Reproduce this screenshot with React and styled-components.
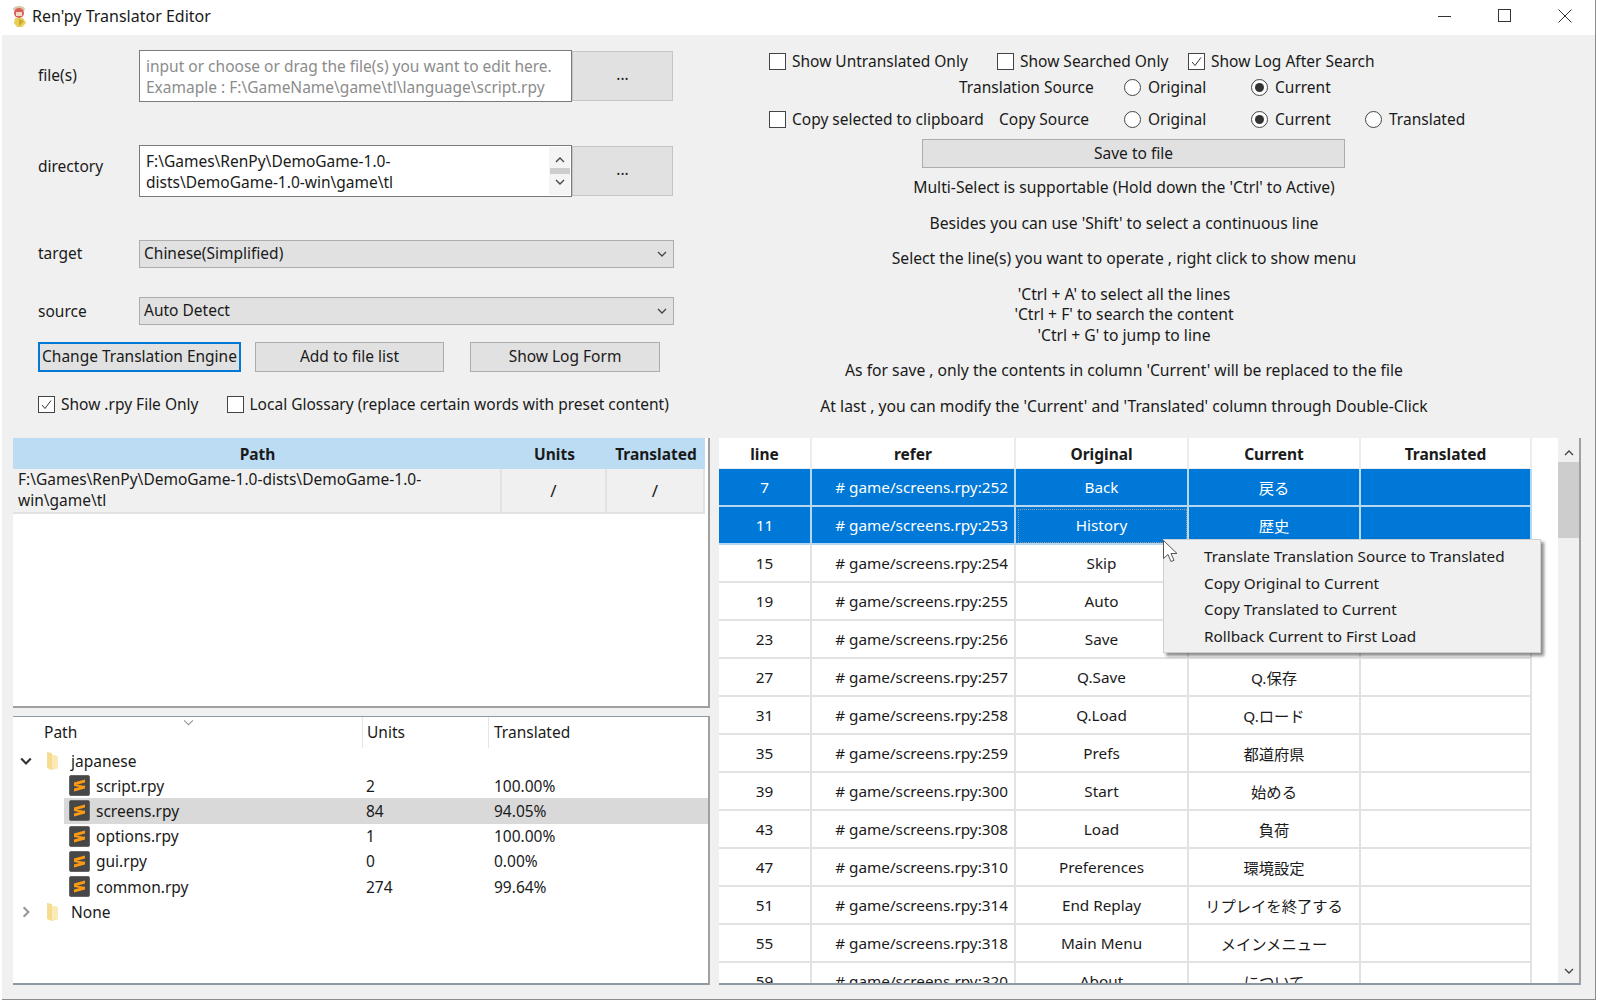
import React from "react";
import styled, { createGlobalStyle } from "styled-components";

const Global = createGlobalStyle`
  html, body { margin: 0; padding: 0; background: #fff; }
  * { box-sizing: border-box; }
  body { font-family: "Noto Sans", "Noto Sans CJK JP", sans-serif; font-size: 15.5px; color: #1a1a1a; }
`;

const Window = styled.div`
  width: 1594px; height: 1000px; margin-left: 2px; background: #f0f0f0;
  border-right: 1px solid #8c8c8c; border-bottom: 1px solid #8c8c8c;
  display: flex; flex-direction: column; overflow: hidden;
`;
const TitleBar = styled.header`
  height: 35px; background: #fff; display: flex; align-items: center; padding: 0 0 3px 9px; flex: none;
`;
const Title = styled.span` margin-left: 3px; font-size: 16px; flex: 1; `;
const WinBtn = styled.span`
  width: 60px; display: flex; justify-content: center; align-items: center; height: 32px;
  svg { display: block; }
`;

const Top = styled.div` height: 403px; display: grid; grid-template-columns: 716px 1fr; flex: none; `;
const LeftForm = styled.section` padding: 15px 0 0 36px; display: flex; flex-direction: column; `;
const FieldRow = styled.div`
  display: grid; grid-template-columns: 101px 1fr; width: 636px; align-items: center; margin-top: ${p => p.$mt || 0}px;
`;
const Label = styled.label` align-self: center; padding-bottom: ${p => p.$pb || 0}px; `;
const InputGroup = styled.div` display: grid; grid-template-columns: 433px 101px; height: 52px; align-items: center; `;
const TextBox = styled.div`
  height: 52px; background: #fff; border: 1px solid #7a7a7a; padding: 5px 6px 3px; line-height: 20.5px;
  color: ${p => p.$hint ? "#8c8c8c" : "#1a1a1a"}; display: flex; white-space: pre-line; justify-content: space-between;
`;
const MiniScroll = styled.div`
  width: 21px; margin: -4px -5px -2px 0; background: #f4f4f4; display: flex; flex-direction: column; align-items: center; justify-content: space-between; padding: 8px 0;
`;
const MiniThumb = styled.div` width: 20px; height: 6px; background: #cdcdcd; `;
const BrowseBtn = styled.button`
  height: 50px; background: #e1e1e1; border: 1px solid #c4c4c4; font: inherit; color: #1a1a1a; padding: 0 0 4px;
`;
const Combo = styled.div`
  height: 28px; background: #e1e1e1; border: 1px solid #adadad; display: flex; align-items: center; justify-content: space-between;
  padding: 0 6px 2px 4px; width: 535px;
  svg { margin-top: 2px; }
`;
const BtnRow = styled.div` display: flex; margin-top: 17px; `;
const Btn = styled.button`
  height: 30px; width: ${p => p.$w}px; margin-left: ${p => p.$ml || 0}px; padding: 0 0 2px; font: inherit; color: #1a1a1a; background: #e1e1e1;
  border: ${p => p.$focus ? "2px solid #0078d7" : "1px solid #adadad"};
`;
const CheckRow = styled.div` display: flex; margin-top: 20px; `;
const CheckLabel = styled.label`
  display: inline-flex; align-items: center; gap: ${p => p.$gap || 6}px; height: 24px; white-space: nowrap; margin-left: ${p => p.$ml || 0}px;
`;
const Box = styled.span`
  width: 17px; height: 17px; border: 1px solid #444; background: #fff; display: flex; align-items: center; justify-content: center; flex: none;
`;
const Radio = styled.span`
  width: 17px; height: 17px; border: 1px solid #444; border-radius: 50%; background: #fff; display: flex; align-items: center; justify-content: center; flex: none;
  &::after { content: ""; width: 9px; height: 9px; border-radius: 50%; background: ${p => p.$on ? "#333" : "transparent"}; }
`;

const RightForm = styled.section` padding-top: 14px; display: flex; flex-direction: column; width: 812px; `;
const OptGrid = styled.div`
  display: grid; grid-template-columns: ${p => p.$cols}; padding-left: ${p => p.$pl}px; margin-top: ${p => p.$mt || 0}px; height: 24px; align-items: center; white-space: nowrap;
`;
const SaveBtn = styled.button`
  width: 423px; height: 29px; margin: 8px 0 0 204px; flex: none; background: #e1e1e1; border: 1px solid #adadad; font: inherit; color: #1a1a1a; padding: 0 0 2px;
`;
const Note = styled.p`
  margin: ${p => p.$mt ?? 15}px 0 0; text-align: center; line-height: 20.5px; white-space: pre-line; font-size: 15.7px;
`;

const Bottom = styled.div` flex: 1; min-height: 0; display: grid; grid-template-columns: 697px 862px; gap: 9px; padding: 0 0 14px 11px; `;
const LeftPanels = styled.div` display: grid; grid-template-rows: 270px 269px; gap: 8px; `;
const FileTable = styled.div` background: #fff; border-right: 2px solid #a0a0a0; border-bottom: 2px solid #a0a0a0; overflow: hidden; `;
const FTRow = styled.div` display: grid; grid-template-columns: 489px 105px 98px; width: 692px; `;
const FTHead = styled.div`
  height: 31px; background: #bcdcf4; font-weight: 700; display: flex; align-items: center; justify-content: center;
`;
const FTCell = styled.div`
  height: 45px; background: #f0f0f0; border-right: 2px solid #e2e2e2; border-bottom: 2px solid #e2e2e2;
  display: block; line-height: 20.5px; padding: ${p => p.$center ? "12px 0 0" : "0 4px 0 5px"};
  text-align: ${p => p.$center ? "center" : "left"}; font-size: ${p => p.$center ? 17 : 15.5}px;
`;

const Tree = styled.div` background: #fff; border-top: 1px solid #8f98a3; border-right: 2px solid #a0a0a0; border-bottom: 2px solid #8f98a3; `;
const TreeHead = styled.div` position: relative; height: 31px; display: grid; grid-template-columns: 350px 126px 1fr; align-items: center; `;
const TH = styled.div` padding-left: ${p => p.$pl}px; height: 31px; line-height: 30px; border-right: ${p => p.$sep ? "1px solid #e5e5e5" : "0"}; `;
const SortMark = styled.span` position: absolute; left: 170px; top: 0; line-height: 0; `;
const TreeRow = styled.div`
  height: 25.2px; display: grid; grid-template-columns: ${p => p.$file ? "297px 128px 1fr" : "350px 126px 1fr"}; align-items: center;
  margin-left: ${p => p.$file ? 51 : 0}px; background: ${p => p.$sel ? "#d9d9d9" : "transparent"};
`;
const TreeName = styled.div` display: flex; align-items: center; `;
const Twisty = styled.span` width: 26px; margin-left: 7px; display: flex; align-items: center; `;
const FolderName = styled.span` margin-left: 12px; `;
const FileName = styled.span` margin-left: 6px; `;
const FileIconWrap = styled.span` margin-left: 5px; display: flex; `;
const TD = styled.div` padding-left: 5px; `;

const Grid = styled.div` position: relative; background: #fff; overflow: hidden; border-right: 2px solid #a0a0a0; border-bottom: 2px solid #8f98a3; height: 547px; `;
const GRow = styled.div` display: grid; grid-template-columns: 93px 204px 173px 172px 171px; width: 813px; `;
const GHead = styled.div` height: 31px; display: flex; align-items: center; justify-content: center; padding-top: 2px; font-weight: 700; border-right: 2px solid #ececec; border-bottom: 1px solid #ececec; `;
const GCell = styled.div`
  height: 38px; display: flex; align-items: center; justify-content: ${p => p.$right ? "flex-end" : "center"}; padding: 0 ${p => p.$right ? 6 : 0}px 1px 0;
  font-size: 15.3px;
  background: ${p => p.$sel ? "#0078d7" : "#fff"}; color: ${p => p.$sel ? "#fff" : "#1a1a1a"};
  border-right: 2px solid ${p => p.$sel ? "#b8d8f2" : "#e2e2e2"}; border-bottom: 2px solid ${p => p.$sel ? "#b8d8f2" : "#e2e2e2"};
  outline: ${p => p.$focus ? "1px dotted #9a9a9a" : "0"}; outline-offset: -3px;
`;
const VScroll = styled.div`
  position: absolute; right: 0; top: 0; bottom: 0; width: 21px; background: #f0f0f0; display: flex; flex-direction: column; align-items: center;
  justify-content: space-between; padding: 10px 0 7px;
`;
const VThumb = styled.div` position: absolute; left: 0; top: 24px; width: 21px; height: 76px; background: #cdcdcd; `;
const Menu = styled.div`
  position: absolute; left: 444px; top: 101px; width: 378px; height: 114px; background: #f0f0f0; border: 1px solid #cfcfcf;
  box-shadow: 3px 3px 3px rgba(0,0,0,.45); padding: 3px 0 0 40px; font-size: 15.3px;
`;
const MenuItem = styled.div` height: 26.6px; line-height: 26px; white-space: nowrap; `;
const Cursor = styled.svg` position: absolute; left: 444px; top: 102px; `;

const Chev = ({ dir = "down", size = 10, color = "#444", sw = 1.3 }) => {
  const d = { down: "M1 3l4 4 4-4", up: "M1 7l4-4 4 4", right: "M3 1l4 4-4 4" }[dir];
  return <svg width={size} height={size} viewBox="0 0 10 10" fill="none" stroke={color} strokeWidth={sw}><path d={d} /></svg>;
};
const Check = () => <svg width="13" height="13" viewBox="0 0 13 13" fill="none" stroke="#333" strokeWidth="1"><path d="M2 7l3 3.5 6-8" /></svg>;
const CB = ({ on, children, ml }) => <CheckLabel $ml={ml}><Box>{on && <Check />}</Box>{children}</CheckLabel>;
const RB = ({ on, children }) => <CheckLabel $gap={7}><Radio $on={on} />{children}</CheckLabel>;

const Folder = () => (
  <svg width="13" height="20" viewBox="0 0 13 20">
    <path d="M1 1l5 1v2l6 1v12l-6 2-5-2z" fill="#f6dc8e" />
    <path d="M6 4l6 1v12l-6 2z" fill="#fbeab8" />
  </svg>
);
const Sublime = () => (
  <svg width="21" height="21" viewBox="0 0 21 21">
    <rect x=".5" y=".5" width="20" height="20" rx="1.5" fill="#474747" stroke="#666" />
    <path d="M5 7.5L16 4.5V7.5L5 10.5z" fill="#fc9a14" />
    <path d="M5 9L16 11V13L5 11z" fill="#fc9a14" />
    <path d="M5 13.5L16 10.5V13.5L5 16.5z" fill="#fc9a14" />
  </svg>
);
const AppIcon = () => (
  <svg width="18" height="22" viewBox="0 0 18 22">
    <ellipse cx="8" cy="4" rx="6" ry="3" fill="#d9c9a8" />
    <circle cx="8" cy="8" r="5" fill="#d9605a" />
    <rect x="5" y="7" width="6" height="4" fill="#f6d9c4" />
    <path d="M4 13h8l3 5-4 4H6l-3-4z" fill="#e9cf5a" />
    <path d="M8 14l5 2-5 5z" fill="#c9a92e" />
  </svg>
);

const rows = [
  [7, 252, "Back", "戻る"], [11, 253, "History", "歴史"], [15, 254, "Skip", ""], [19, 255, "Auto", ""],
  [23, 256, "Save", ""], [27, 257, "Q.Save", "Q.保存"], [31, 258, "Q.Load", "Q.ロード"], [35, 259, "Prefs", "都道府県"],
  [39, 300, "Start", "始める"], [43, 308, "Load", "負荷"], [47, 310, "Preferences", "環境設定"], [51, 314, "End Replay", "リプレイを終了する"],
  [55, 318, "Main Menu", "メインメニュー"], [59, 320, "About", "について"],
];
const files = [["script.rpy", "2", "100.00%"], ["screens.rpy", "84", "94.05%", true], ["options.rpy", "1", "100.00%"], ["gui.rpy", "0", "0.00%"], ["common.rpy", "274", "99.64%"]];

export default function App() {
  return (
    <Window>
      <Global />
      <TitleBar>
        <AppIcon />
        <Title>Ren'py Translator Editor</Title>
        <WinBtn><svg width="14" height="14" viewBox="0 0 14 14" stroke="#333" fill="none"><path d="M0 7.5h13" /></svg></WinBtn>
        <WinBtn><svg width="14" height="14" viewBox="0 0 14 14" stroke="#333" fill="none"><rect x=".5" y=".5" width="12" height="12" /></svg></WinBtn>
        <WinBtn><svg width="14" height="14" viewBox="0 0 14 14" stroke="#333" fill="none"><path d="M.5.5l13 13M13.5.5l-13 13" /></svg></WinBtn>
      </TitleBar>
      <Top>
        <LeftForm>
          <FieldRow>
            <Label $pb={2}>file(s)</Label>
            <InputGroup>
              <TextBox $hint>{"input or choose or drag the file(s) you want to edit here.\nExamaple : F:\\GameName\\game\\tl\\language\\script.rpy"}</TextBox>
              <BrowseBtn>...</BrowseBtn>
            </InputGroup>
          </FieldRow>
          <FieldRow $mt={43}>
            <Label $pb={10}>directory</Label>
            <InputGroup>
              <TextBox>
                <span>{"F:\\Games\\RenPy\\DemoGame-1.0-\ndists\\DemoGame-1.0-win\\game\\tl"}</span>
                <MiniScroll><Chev dir="up" /><MiniThumb /><Chev /></MiniScroll>
              </TextBox>
              <BrowseBtn>...</BrowseBtn>
            </InputGroup>
          </FieldRow>
          <FieldRow $mt={43}>
            <Label $pb={3}>target</Label>
            <Combo>Chinese(Simplified)<Chev /></Combo>
          </FieldRow>
          <FieldRow $mt={29}>
            <Label>source</Label>
            <Combo>Auto Detect<Chev /></Combo>
          </FieldRow>
          <BtnRow>
            <Btn $w={203} $focus>Change Translation Engine</Btn>
            <Btn $w={189} $ml={14}>Add to file list</Btn>
            <Btn $w={190} $ml={26}>Show Log Form</Btn>
          </BtnRow>
          <CheckRow>
            <CB on>Show .rpy File Only</CB>
            <CB ml={28}>Local Glossary (replace certain words with preset content)</CB>
          </CheckRow>
        </LeftForm>
        <RightForm>
          <OptGrid $pl={51} $cols="228px 191px auto">
            <CB>Show Untranslated Only</CB>
            <CB>Show Searched Only</CB>
            <CB on>Show Log After Search</CB>
          </OptGrid>
          <OptGrid $pl={241} $mt={2} $cols="165px 127px auto">
            <span>Translation Source</span>
            <RB>Original</RB>
            <RB on>Current</RB>
          </OptGrid>
          <OptGrid $pl={51} $mt={8} $cols="230px 125px 127px 114px auto">
            <CB>Copy selected to clipboard</CB>
            <span>Copy Source</span>
            <RB>Original</RB>
            <RB on>Current</RB>
            <RB>Translated</RB>
          </OptGrid>
          <SaveBtn>Save to file</SaveBtn>
          <Note $mt={9}>Multi-Select is supportable (Hold down the 'Ctrl' to Active)</Note>
          <Note>Besides you can use 'Shift' to select a continuous line</Note>
          <Note>Select the line(s) you want to operate , right click to show menu</Note>
          <Note>{"'Ctrl + A' to select all the lines\n'Ctrl + F' to search the content\n'Ctrl + G' to jump to line"}</Note>
          <Note>As for save , only the contents in column 'Current' will be replaced to the file</Note>
          <Note>At last , you can modify the 'Current' and 'Translated' column through Double-Click</Note>
        </RightForm>
      </Top>
      <Bottom>
        <LeftPanels>
          <FileTable>
            <FTRow><FTHead>Path</FTHead><FTHead>Units</FTHead><FTHead>Translated</FTHead></FTRow>
            <FTRow>
              <FTCell>F:\Games\RenPy\DemoGame-1.0-dists\DemoGame-1.0-<br />win\game\tl</FTCell>
              <FTCell $center>/</FTCell>
              <FTCell $center>/</FTCell>
            </FTRow>
          </FileTable>
          <Tree>
            <TreeHead>
              <TH $pl={31} $sep>Path</TH><TH $pl={4} $sep>Units</TH><TH $pl={5}>Translated</TH>
              <SortMark><Chev size={11} color="#999" sw={1} /></SortMark>
            </TreeHead>
            <TreeRow>
              <TreeName><Twisty><Chev size={12} color="#333" sw={1.8} /></Twisty><Folder /><FolderName>japanese</FolderName></TreeName>
            </TreeRow>
            {files.map(f => (
              <TreeRow $file $sel={f[3]} key={f[0]}>
                <TreeName><FileIconWrap><Sublime /></FileIconWrap><FileName>{f[0]}</FileName></TreeName>
                <TD>{f[1]}</TD><TD>{f[2]}</TD>
              </TreeRow>
            ))}
            <TreeRow>
              <TreeName><Twisty><Chev dir="right" size={12} color="#999" sw={1.8} /></Twisty><Folder /><FolderName>None</FolderName></TreeName>
            </TreeRow>
          </Tree>
        </LeftPanels>
        <Grid>
          <GRow>{["line", "refer", "Original", "Current", "Translated"].map(h => <GHead key={h}>{h}</GHead>)}</GRow>
          {rows.map((r, i) => {
            const sel = i < 2;
            return (
              <GRow key={r[0]}>
                <GCell $sel={sel}>{r[0]}</GCell>
                <GCell $sel={sel} $right># game/screens.rpy:{r[1]}</GCell>
                <GCell $sel={sel} $focus={i === 1}>{r[2]}</GCell>
                <GCell $sel={sel}>{r[3]}</GCell>
                <GCell $sel={sel} />
              </GRow>
            );
          })}
          <VScroll><VThumb /><Chev dir="up" /><Chev /></VScroll>
          <Menu>
            <MenuItem>Translate Translation Source to Translated</MenuItem>
            <MenuItem>Copy Original to Current</MenuItem>
            <MenuItem>Copy Translated to Current</MenuItem>
            <MenuItem>Rollback Current to First Load</MenuItem>
          </Menu>
          <Cursor width="17" height="23" viewBox="0 0 17 23"><path d="M.5.5v18l4.5-4 3 7 3-1.2-3-6.8h6z" fill="#fff" stroke="#555" /></Cursor>
        </Grid>
      </Bottom>
    </Window>
  );
}
